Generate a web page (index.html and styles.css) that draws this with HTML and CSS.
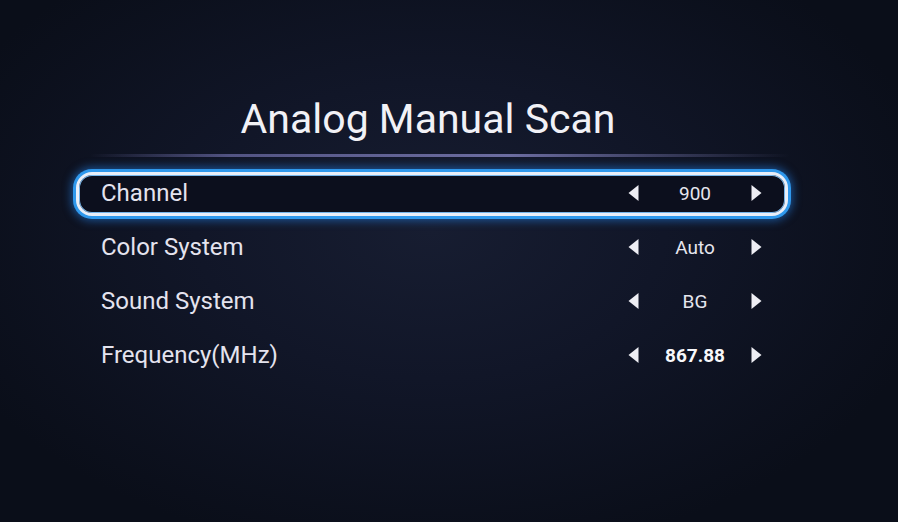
FILE: index.html
```html
<!DOCTYPE html>
<html>
<head>
<meta charset="utf-8">
<link rel="stylesheet" href="styles.css">
</head>
<body>
<div class="screen">
  <div class="panel">
    <h1 class="title">Analog Manual Scan</h1>
    <div class="divider"></div>
    <div class="menu">
      <div class="row selected">
        <span class="label">Channel</span>
        <div class="ctrl">
          <svg class="arrow" viewBox="0 0 10 16"><polygon points="10,0 10,16 0,8"/></svg>
          <span class="value">900</span>
          <svg class="arrow" viewBox="0 0 10 16"><polygon points="0,0 0,16 10,8"/></svg>
        </div>
      </div>
      <div class="row">
        <span class="label">Color System</span>
        <div class="ctrl">
          <svg class="arrow" viewBox="0 0 10 16"><polygon points="10,0 10,16 0,8"/></svg>
          <span class="value">Auto</span>
          <svg class="arrow" viewBox="0 0 10 16"><polygon points="0,0 0,16 10,8"/></svg>
        </div>
      </div>
      <div class="row">
        <span class="label">Sound System</span>
        <div class="ctrl">
          <svg class="arrow" viewBox="0 0 10 16"><polygon points="10,0 10,16 0,8"/></svg>
          <span class="value">BG</span>
          <svg class="arrow" viewBox="0 0 10 16"><polygon points="0,0 0,16 10,8"/></svg>
        </div>
      </div>
      <div class="row">
        <span class="label">Frequency(MHz)</span>
        <div class="ctrl">
          <svg class="arrow" viewBox="0 0 10 16"><polygon points="10,0 10,16 0,8"/></svg>
          <span class="value bold">867.88</span>
          <svg class="arrow" viewBox="0 0 10 16"><polygon points="0,0 0,16 10,8"/></svg>
        </div>
      </div>
    </div>
  </div>
</div>
</body>
</html>
```

FILE: styles.css
```css
* { box-sizing: border-box; }
html, body {
  margin: 0;
  padding: 0;
  width: 898px;
  height: 522px;
  overflow: hidden;
  background: #0a0e19;
}
.screen {
  width: 898px;
  height: 522px;
  background: radial-gradient(ellipse 520px 330px at 430px 230px, #171d31 0%, #111628 45%, #0a0e19 100%);
  font-family: Roboto, "Liberation Sans", sans-serif;
  padding-top: 95px;
}
.panel {
  margin-left: 76px;
  width: 712px;
}
.title {
  margin: 0;
  font-weight: 400;
  font-size: 41px;
  line-height: 48px;
  color: #f1f1f6;
  text-align: center;
  padding-right: 8px;
}
.divider {
  height: 3px;
  margin: 11px 0 0 14px;
  width: 700px;
  background: linear-gradient(90deg, rgba(90,90,150,0) 0%, rgba(110,110,170,0.7) 20%, rgba(130,130,190,0.8) 60%, rgba(90,90,150,0) 100%);
  border-radius: 2px;
}
.menu {
  margin-top: 15px;
  display: flex;
  flex-direction: column;
  gap: 10px;
}
.row {
  height: 44px;
  display: flex;
  align-items: center;
  justify-content: space-between;
  padding: 0 23px 2px 22px;
  border: 3px solid transparent;
  border-radius: 16px;
}
.row.selected {
  border-color: #e9eef8;
  background: #0c0f1d;
  box-shadow: 0 0 0 3px #2f98ec, 0 0 9px 5px rgba(35,125,225,0.55), inset 0 0 0 1px #76b6ec;
}
.label {
  font-size: 24px;
  color: #e4e3ee;
}
.ctrl {
  display: flex;
  align-items: center;
}
.arrow {
  width: 11px;
  height: 16px;
  fill: #eeeef4;
}
.value {
  width: 102px;
  margin: 0 5px;
  text-align: center;
  font-size: 19px;
  color: #e6e6ee;
}
.value.bold {
  font-weight: 700;
  color: #f7f7fa;
}
```
